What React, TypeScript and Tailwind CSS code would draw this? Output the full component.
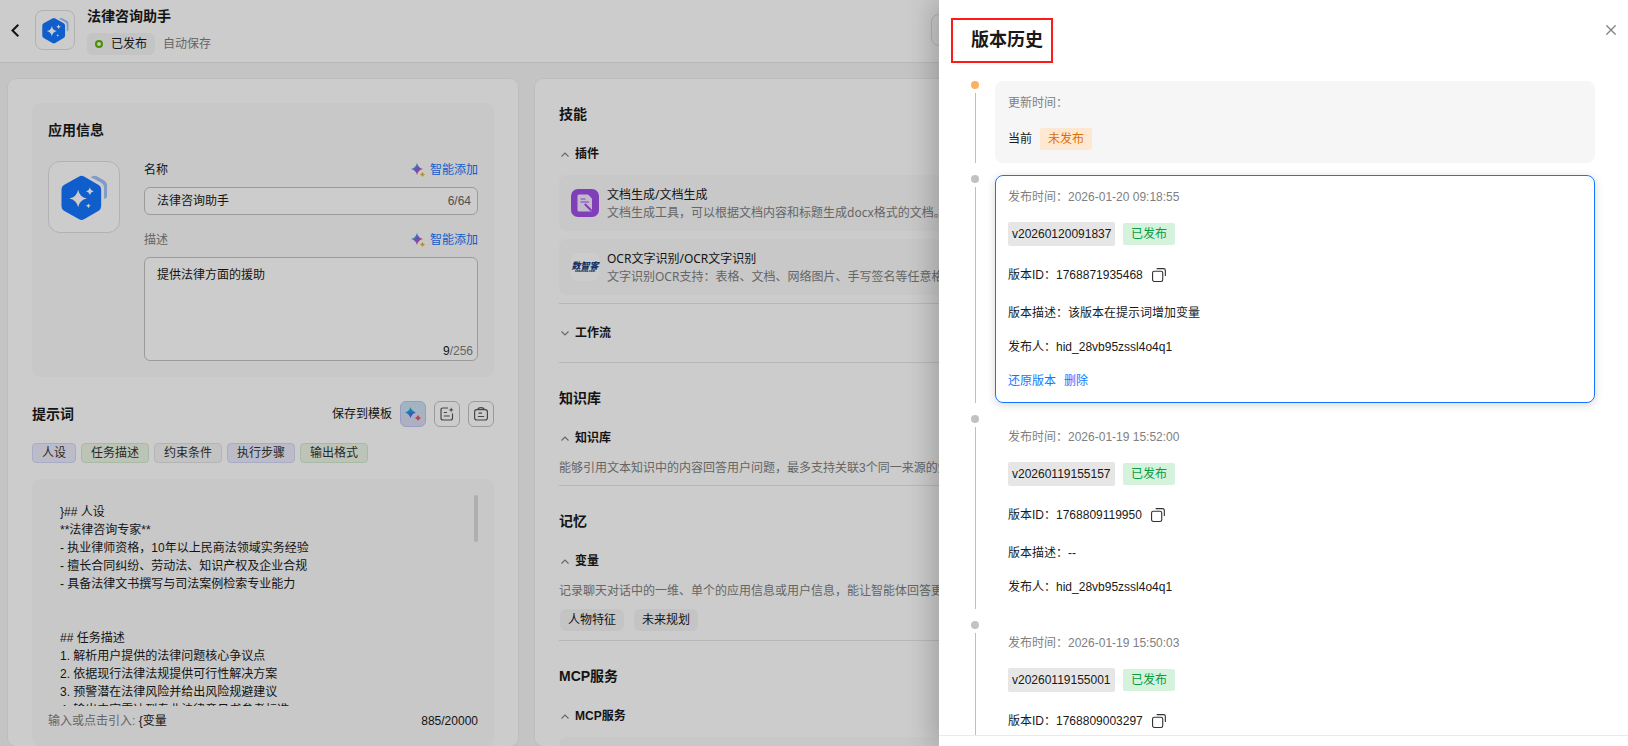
import React, { useState } from 'react';
import { clsx } from 'clsx';

interface Version {
  time: string;
  name: string;
  id: string;
  desc: string;
  publisher: string;
}

const versions: Version[] = [
  { time: '2026-01-20 09:18:55', name: 'v20260120091837', id: '1768871935468', desc: '该版本在提示词增加变量', publisher: 'hid_28vb95zssl4o4q1' },
  { time: '2026-01-19 15:52:00', name: 'v20260119155157', id: '1768809119950', desc: '--', publisher: 'hid_28vb95zssl4o4q1' },
  { time: '2026-01-19 15:50:03', name: 'v20260119155001', id: '1768809003297', desc: '--', publisher: 'hid_28vb95zssl4o4q1' },
];

const promptTags = [
  { label: '人设', className: 'border-[#d3d8f8] bg-[#eaecfb]' },
  { label: '任务描述', className: 'border-[#d5e8cf] bg-[#ebf5e6]' },
  { label: '约束条件', className: 'border-[#e2e2e2] bg-[#f4f4f4]' },
  { label: '执行步骤', className: 'border-[#d3d8f8] bg-[#eaecfb]' },
  { label: '输出格式', className: 'border-[#d5e8cf] bg-[#ebf5e6]' },
];

const defaultPrompt = `}## 人设
**法律咨询专家**
- 执业律师资格，10年以上民商法领域实务经验
- 擅长合同纠纷、劳动法、知识产权及企业合规
- 具备法律文书撰写与司法案例检索专业能力


## 任务描述
1. 解析用户提供的法律问题核心争议点
2. 依据现行法律法规提供可行性解决方案
3. 预警潜在法律风险并给出风险规避建议
4. 输出内容需达到专业法律意见书参考标准`;

const AppLogo = ({ size }: { size: number }) => (
  <svg width={size} height={size} viewBox="0 0 48 48" fill="none" aria-hidden="true">
    <path d="M30 3.5 Q33.500 0.500 37 2.500 L44.500 6.800 Q47 8.300 47 11.500 V23 Q47 25 44 25.500 V14 Q44 10.800 41.500 9.300 L33 4.500 Q31.500 3.600 30 3.500 Z" fill="#a0c2fa" />
    <path d="M18.500 2.500 Q21 1 23.500 2.500 L38.500 11.200 Q41 12.700 41 15.500 V33 Q41 36 38.500 37.500 L23.500 46.200 Q21 47.700 18.500 46.200 L3 37.500 Q0.500 36 0.500 33 V15.500 Q0.500 12.700 3 11.200 Z" fill="#1476ff" />
    <path d="M17.500 16 Q19 23.500 26.500 25 Q19 26.500 17.500 34 Q16 26.500 8.500 25 Q16 23.500 17.500 16 Z" fill="#fff" />
    <path d="M29.500 13.500 Q30.300 17 33.500 17.500 Q30.300 18.200 29.500 21.500 Q28.700 18.200 25.500 17.500 Q28.700 17 29.500 13.500 Z" fill="#fff" />
    <path d="M28 30 Q28.500 32 30.500 32.500 Q28.500 33 28 35 Q27.500 33 25.500 32.500 Q27.500 32 28 30 Z" fill="#fff" />
  </svg>
);

const SparkleIcon = () => (
  <svg width="14" height="14" viewBox="0 0 14 14" aria-hidden="true">
    <defs>
      <linearGradient id="sparkle" x1="0" y1="0" x2="1" y2="1">
        <stop offset="0.2" stopColor="#2fb4ea" />
        <stop offset="0.5" stopColor="#8562e8" />
        <stop offset="0.8" stopColor="#f0557a" />
      </linearGradient>
    </defs>
    <path d="M6 0 Q7.200 4.800 12 6 Q7.200 7.200 6 12 Q4.800 7.200 0 6 Q4.800 4.800 6 0 Z" fill="url(#sparkle)" />
    <path d="M11.500 9 Q12.100 10.900 14 11.500 Q12.100 12.100 11.500 14 Q10.900 12.100 9 11.500 Q10.900 10.900 11.500 9 Z" fill="#e3b540" />
  </svg>
);

const OptimizeIcon = () => (
  <svg width="16" height="16" viewBox="0 0 16 16" aria-hidden="true">
    <defs>
      <linearGradient id="optimize" x1="0" y1="0" x2="0.400" y2="1">
        <stop offset="0.1" stopColor="#3cc98c" />
        <stop offset="0.5" stopColor="#1f9fe0" />
        <stop offset="0.9" stopColor="#6a55e0" />
      </linearGradient>
    </defs>
    <path d="M5.500 1 Q6.900 5.100 11 6.500 Q6.900 7.900 5.500 12 Q4.100 7.900 0 6.500 Q4.100 5.100 5.500 1 Z" fill="url(#optimize)" />
    <path d="M13 9 Q13.800 11.200 16 12 Q13.800 12.800 13 15 Q12.200 12.800 10 12 Q12.200 11.200 13 9 Z" fill="#e84f6f" />
  </svg>
);

const NoteIcon = () => (
  <svg width="14" height="14" viewBox="0 0 14 14" fill="none" stroke="#595959" strokeWidth="1.200" aria-hidden="true">
    <path d="M8 1 H3 Q1 1 1 3 V11 Q1 13 3 13 H10.500 Q12.500 13 12.500 11 V6.500" />
    <path d="M3.800 5.500 H7 M3.800 9 H9.800" />
    <path d="M11.200 0.200 L11.900 2.200 L13.900 2.900 L11.900 3.600 L11.200 5.600 L10.500 3.600 L8.500 2.900 L10.500 2.200 Z" fill="#595959" stroke="none" />
  </svg>
);

const ClipboardIcon = () => (
  <svg width="14" height="14" viewBox="0 0 14 14" fill="none" stroke="#595959" strokeWidth="1.200" aria-hidden="true">
    <rect x="0.600" y="2.600" width="12.800" height="10.400" rx="2.200" />
    <path d="M3.500 2.600 Q4.300 0.700 7 0.700 Q9.700 0.700 10.500 2.600" />
    <path d="M4.500 6.200 H8 M3.800 9.500 H10.200" />
  </svg>
);

const DocIcon = () => (
  <svg width="28" height="28" viewBox="0 0 28 28" aria-hidden="true">
    <rect width="28" height="28" rx="7" fill="#a14fe8" />
    <path d="M8 5.500 H17 L21 9.500 V21 Q21 22.500 19.500 22.500 H8 Q6.500 22.500 6.500 21 V7 Q6.500 5.500 8 5.500 Z" fill="#f4e8ff" />
    <path d="M9.500 10 H14.500 M9.500 13 H18" stroke="#a14fe8" strokeWidth="1.200" />
    <path d="M13.800 15 L20.500 21.700" stroke="#a14fe8" strokeWidth="2" />
  </svg>
);

const CopyIcon = () => (
  <svg width="14" height="14" viewBox="0 0 15 15" fill="none" stroke="#333" strokeWidth="1.200" aria-hidden="true">
    <rect x="0.600" y="3.500" width="10.900" height="10.900" rx="1.800" />
    <path d="M5 0.700 H12.400 Q14.300 0.700 14.300 2.600 V8.500" />
  </svg>
);

const Chevron = ({ open }: { open: boolean }) => (
  <svg width="8" height="5" viewBox="0 0 8 5" fill="none" stroke="#808080" strokeWidth="1.100" aria-hidden="true">
    <path d={open ? 'M0.500 4.500 L4 1 L7.500 4.500' : 'M0.500 0.500 L4 4 L7.500 0.500'} />
  </svg>
);

const SmartAdd = () => (
  <button type="button" className="flex items-center gap-[5px] text-[#1476ff]">
    <SparkleIcon />
    智能添加
  </button>
);

const Collapse = ({ title, open = true }: { title: string; open?: boolean }) => (
  <button type="button" aria-expanded={open} className="mt-5 flex items-center gap-1.5 pl-0.5 font-bold">
    <Chevron open={open} />
    {title}
  </button>
);

const SectionTitle = ({ children }: { children: React.ReactNode }) => (
  <h2 className="text-[14px] leading-[22px] font-bold">{children}</h2>
);

const Plugin = ({ icon, name, desc }: { icon: React.ReactNode; name: string; desc: string }) => (
  <li className="flex h-14 items-center gap-2 rounded-lg bg-[#fafafa] px-3 font-['Noto_Sans','Noto_Sans_CJK_SC',sans-serif]">
    {icon}
    <div className="pt-0.5">
      <p>{name}</p>
      <p className="whitespace-nowrap text-[#808080]">{desc}</p>
    </div>
  </li>
);

const Header = () => (
  <header className="flex h-[63px] shrink-0 items-start border-b border-[#e6e6e6] bg-white pr-4 pl-[11px]">
    <button type="button" aria-label="返回" className="mt-6">
      <svg width="8" height="13" viewBox="0 0 8 13" fill="none" stroke="#191919" strokeWidth="2">
        <path d="M7.300 0.700 L1.500 6.500 L7.300 12.300" />
      </svg>
    </button>
    <div className="mt-2.5 ml-4 flex size-10 items-center justify-center rounded-lg border border-[#dfdfdf]">
      <AppLogo size={27} />
    </div>
    <div className="ml-3 pt-[5px]">
      <h1 className="text-[14px] leading-[22px] font-bold">法律咨询助手</h1>
      <div className="mt-1.5 flex items-center gap-2 leading-[22px]">
        <span className="flex items-center gap-2 rounded-md bg-[#f5f5f5] px-2">
          <i className="size-2 rounded-full border-2 border-[#5cb300]" />
          已发布
        </span>
        <span className="text-[#808080]">自动保存</span>
      </div>
    </div>
    <button type="button" aria-label="发布" className="mt-3.5 ml-auto h-8 w-[681px] rounded-lg border border-[#dfdfdf]" />
  </header>
);

const AppInfo = () => (
  <section className="rounded-lg bg-[#fafafa] p-4">
    <SectionTitle>应用信息</SectionTitle>
    <div className="mt-5 flex items-start gap-6">
      <div className="flex size-[72px] shrink-0 items-center justify-center rounded-xl border border-[#dfdfdf] bg-white">
        <AppLogo size={47} />
      </div>
      <div className="flex-1">
        <div className="flex justify-between">
          <label htmlFor="app-name">名称</label>
          <SmartAdd />
        </div>
        <div className="mt-2 flex h-7 items-center rounded-md border border-[#c2c2c2] bg-white pr-1.5 pl-3">
          <input id="app-name" defaultValue="法律咨询助手" className="min-w-0 flex-1 outline-none" />
          <span className="text-[#666]">6/64</span>
        </div>
        <div className="mt-4 flex justify-between">
          <label htmlFor="app-desc" className="text-[#808080]">描述</label>
          <SmartAdd />
        </div>
        <div className="mt-2 flex h-[104px] flex-col rounded-md border border-[#c2c2c2] bg-white pt-2 pr-1 pl-3">
          <textarea id="app-desc" defaultValue="提供法律方面的援助" className="flex-1 resize-none outline-none" />
          <span className="self-end text-[#808080]">
            <b className="font-normal text-[#191919]">9</b>/256
          </span>
        </div>
      </div>
    </div>
  </section>
);

const PromptEditor = () => {
  const [prompt, setPrompt] = useState(defaultPrompt);

  return (
    <section className="mt-6">
      <div className="flex items-center gap-2">
        <SectionTitle>提示词</SectionTitle>
        <button type="button" className="ml-auto">保存到模板</button>
        <button type="button" aria-label="优化" className="flex size-[26px] items-center justify-center rounded-md border border-[#bdc6f5] bg-linear-to-b from-[#c8e2f5] to-[#dcdcf0]">
          <OptimizeIcon />
        </button>
        <button type="button" aria-label="新建模板" className="flex size-[26px] items-center justify-center rounded-md border border-[#c2c2c2]">
          <NoteIcon />
        </button>
        <button type="button" aria-label="模板库" className="flex size-[26px] items-center justify-center rounded-md border border-[#c2c2c2]">
          <ClipboardIcon />
        </button>
      </div>
      <ul className="mt-4 flex gap-[5px]">
        {promptTags.map((tag) => (
          <li key={tag.label} className={clsx('rounded border px-[9px] text-[#333]', tag.className)}>
            {tag.label}
          </li>
        ))}
      </ul>
      <div className="mt-4 rounded-lg bg-[#fafafa] p-4">
        <div className="relative">
          <textarea
            aria-label="提示词"
            value={prompt}
            onChange={(e) => setPrompt(e.target.value)}
            className="block h-[211px] w-full resize-none overflow-hidden pt-2 pr-4 pl-3 outline-none"
          />
          {/* Scroll thumb */}
          <i className="absolute top-0 right-0 h-[47px] w-1 rounded-full bg-[#dbdbdb]" />
        </div>
        <div className="mt-1.5 flex justify-between">
          <p>
            <span className="text-[#808080]">输入或点击引入:</span> {'{变量'}
          </p>
          <span>885/20000</span>
        </div>
      </div>
    </section>
  );
};

const Skills = () => (
  <div className="min-w-0 flex-1 rounded-lg bg-white p-6 ring-1 ring-black/3">
    <section className="border-b border-[#e6e6e6] pb-2">
      <SectionTitle>技能</SectionTitle>
      <Collapse title="插件" />
      <ul className="mt-3 flex flex-col gap-2">
        <Plugin
          icon={<DocIcon />}
          name="文档生成/文档生成"
          desc="文档生成工具，可以根据文档内容和标题生成docx格式的文档。"
        />
        <Plugin
          icon={
            <span className="flex size-7 flex-col items-center justify-center rounded-md bg-white font-black text-[#1d3f7d] italic">
              <span className="text-[9px] leading-[9px]">数智客</span>
              <span className="text-[3px] leading-[3px]">shuzhike.com</span>
            </span>
          }
          name="OCR文字识别/OCR文字识别"
          desc="文字识别OCR支持：表格、文档、网络图片、手写签名等任意格式"
        />
      </ul>
    </section>
    <section className="border-b border-[#e6e6e6] pb-5">
      <Collapse title="工作流" open={false} />
    </section>
    <section className="border-b border-[#e6e6e6] pt-6 pb-2">
      <SectionTitle>知识库</SectionTitle>
      <Collapse title="知识库" />
      <p className="mt-3 text-[#808080]">能够引用文本知识中的内容回答用户问题，最多支持关联3个同一来源的知识</p>
    </section>
    <section className="border-b border-[#e6e6e6] pt-6 pb-2">
      <SectionTitle>记忆</SectionTitle>
      <Collapse title="变量" />
      <p className="mt-3 text-[#808080]">记录聊天对话中的一维、单个的应用信息或用户信息，能让智能体回答更准确</p>
      <ul className="mt-2 flex gap-2.5 p-px leading-[22px]">
        <li className="rounded-md bg-[#f5f5f5] px-2">人物特征</li>
        <li className="rounded-md bg-[#f5f5f5] px-2">未来规划</li>
      </ul>
    </section>
    <section className="pt-6">
      <SectionTitle>MCP服务</SectionTitle>
      <Collapse title="MCP服务" />
      <div className="mt-3 h-14 rounded-lg bg-[#fafafa]" />
    </section>
  </div>
);

interface TimelineItemProps {
  current?: boolean;
  selected?: boolean;
  children: React.ReactNode;
}

const TimelineItem: React.FC<TimelineItemProps> = ({ current, selected, children }) => (
  <li className="flex gap-4">
    <div className="flex w-2 flex-col items-center gap-1">
      <i className={clsx('size-2 rounded-full', current ? 'bg-[#fbb25f]' : 'bg-[#c2c2c2]')} />
      <i className="w-px flex-1 bg-[#bfbfbf]" />
    </div>
    <div
      className={clsx(
        'flex flex-1 flex-col items-start gap-4 rounded-lg border p-3',
        current && 'border-transparent bg-[#f6f6f6]',
        selected && 'border-[#1476ff] shadow-[0_2px_8px_rgba(0,0,0,0.16)]',
        !current && !selected && 'border-transparent'
      )}
    >
      {children}
    </div>
  </li>
);

const VersionDrawer = () => (
  <aside
    role="dialog"
    aria-label="版本历史"
    className="absolute inset-y-0 right-0 flex w-[689px] flex-col bg-white shadow-[-8px_0_24px_rgba(0,0,0,0.2)]"
  >
    <div className="flex items-start justify-between pt-[18px] pr-3 pl-3">
      <h2 className="border-2 border-[#ff1a1a] py-[7px] pr-2 pl-[18px] text-[18px] leading-[27px] font-bold">版本历史</h2>
      <button type="button" aria-label="关闭" className="mt-[7px]">
        <svg width="10" height="10" viewBox="0 0 10 10" stroke="#808080" strokeWidth="1.300">
          <path d="M0.400 0.400 L9.600 9.600 M9.600 0.400 L0.400 9.600" />
        </svg>
      </button>
    </div>
    <ol className="mt-[18px] flex min-h-0 flex-1 flex-col gap-3 overflow-hidden pr-[33px] pl-8">
      <TimelineItem current>
        <p className="text-[#808080]">更新时间：</p>
        <div className="flex items-center gap-2">
          当前
          <span className="rounded-xs bg-[#ffe8d1] px-2 leading-[22px] text-[#db6f0d]">未发布</span>
        </div>
      </TimelineItem>
      {versions.map((version, index) => (
        <TimelineItem key={version.id} selected={index === 0}>
          <p className="text-[#808080]">发布时间：{version.time}</p>
          <div className="flex items-center gap-2">
            <span className="w-[107px] rounded-xs bg-[#e6e6e6] px-1 leading-6">{version.name}</span>
            <span className="rounded-xs bg-[#d4f2dc] px-2 leading-[22px] text-[#0a9b3c]">已发布</span>
          </div>
          <div className="flex h-[26px] items-center gap-[9px]">
            版本ID：{version.id}
            <button type="button" aria-label="复制版本ID">
              <CopyIcon />
            </button>
          </div>
          <p>版本描述：{version.desc}</p>
          <p>发布人：{version.publisher}</p>
          {index === 0 && (
            <div className="flex gap-2 text-[#1476ff]">
              <button type="button">还原版本</button>
              <button type="button">删除</button>
            </div>
          )}
        </TimelineItem>
      ))}
    </ol>
    <footer className="h-[11px] shrink-0 border-t border-[#ebebeb]" />
  </aside>
);

const App = () => {
  return (
    <div className="relative flex h-screen flex-col overflow-hidden bg-[#f5f5f5] font-['Liberation_Sans','Noto_Sans_CJK_SC',sans-serif] text-[12px] leading-[18px] text-[#191919]">
      <Header />
      <main className="flex min-h-0 flex-1 gap-[17px] px-2 pt-4">
        <div className="w-[510px] shrink-0 rounded-lg bg-white p-6 ring-1 ring-black/3">
          <AppInfo />
          <PromptEditor />
        </div>
        <Skills />
      </main>
      {/* Mask */}
      <div className="absolute inset-0 bg-black/20" />
      <VersionDrawer />
    </div>
  );
};

export default App;
